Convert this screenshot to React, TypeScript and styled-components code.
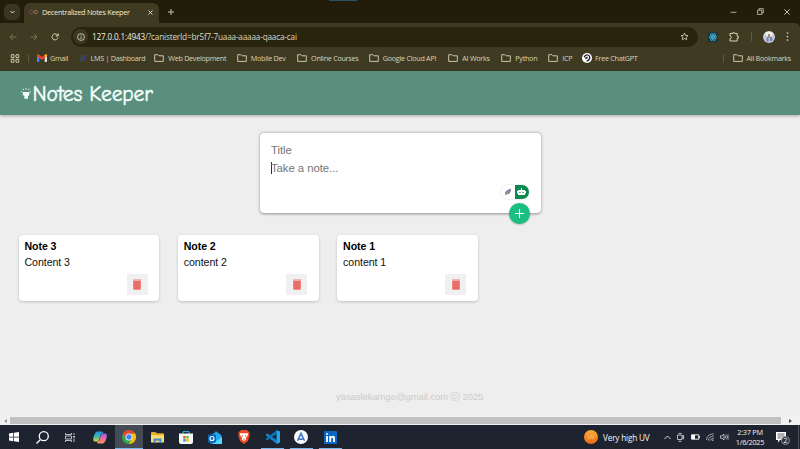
import React from "react";
import styled, { createGlobalStyle } from "styled-components";

const Global = createGlobalStyle`
  * { box-sizing: border-box; }
  html, body { margin: 0; padding: 0; overflow: hidden; background: #eee; }
  button, input, textarea { font: inherit; border: 0; padding: 0; margin: 0; outline: 0; }
`;

const Screen = styled.div`
  width: 800px;
  height: 449px;
  display: flex;
  flex-direction: column;
  overflow: hidden;
  font-family: "Open Sans", "Noto Sans", sans-serif;
  background: #eee;
`;

const Svg = styled.svg`
  display: block;
  flex: none;
  overflow: visible;
`;

/* Browser window */
const TitleBar = styled.div`
  position: relative;
  height: 23px;
  flex: none;
  display: flex;
  align-items: flex-end;
  background: #211d0a;
`;
const TopAccent = styled.span`
  position: absolute;
  left: 329px;
  top: 0;
  width: 28px;
  height: 1px;
  background: #2b5160;
`;
const TabSearch = styled.div`
  width: 16px;
  height: 16px;
  margin: 0 4px 3px 4px;
  border-radius: 5px;
  background: #3a3520;
  display: grid;
  place-items: center;
`;
const Tab = styled.div`
  width: 135px;
  height: 20px;
  padding: 0 6px 2px 5px;
  border-radius: 6px 6px 0 0;
  background: #3f3a22;
  display: flex;
  align-items: center;
`;
const TabTitle = styled.span`
  flex: 1;
  margin-left: 4px;
  font-size: 7.3px;
  letter-spacing: -0.27px;
  color: #eeead8;
  white-space: nowrap;
`;
const NewTab = styled.div`
  margin-left: 9px;
  height: 23px;
  display: flex;
  align-items: center;
`;
const WindowButtons = styled.div`
  margin-left: auto;
  height: 23px;
  padding-right: 10px;
  display: flex;
  align-items: center;
  gap: 20px;
`;
const Toolbar = styled.div`
  height: 25px;
  flex: none;
  display: flex;
  align-items: center;
  padding: 2px 11px 0 9px;
  background: #3f3a22;
  border-top-right-radius: 5px;
`;
const ToolbarBack = styled.div`
  flex: none;
  background: #211d0a;
`;
const NavButtons = styled.div`
  width: 62px;
  display: flex;
  gap: 13px;
`;
const AddressBar = styled.div`
  width: 627px;
  height: 20px;
  border-radius: 10px;
  padding: 0 9px 0 2px;
  background: #28240e;
  display: flex;
  align-items: center;
`;
const SiteInfo = styled.span`
  width: 15px;
  height: 15px;
  border-radius: 50%;
  background: #3d3821;
  display: grid;
  place-items: center;
`;
const Url = styled.span`
  flex: 1;
  margin-left: 4px;
  font-size: 8.2px;
  letter-spacing: -0.18px;
  color: #dcd8c2;
  white-space: nowrap;
`;
const HostName = styled.span`
  color: #f4f1e2;
`;
const ToolActions = styled.div`
  flex: 1;
  margin-left: 10px;
  display: flex;
  align-items: center;
  justify-content: space-between;
`;
const Divider = styled.span`
  width: 1px;
  height: 9px;
  background: #5f5a3f;
`;
const BookmarkBar = styled.nav`
  height: 23px;
  flex: none;
  display: flex;
  align-items: center;
  padding: 0 0 3px 10px;
  background: #3f3a22;
`;
const Bookmark = styled.div<{ $w: number; $gap?: number }>`
  width: ${(p) => p.$w}px;
  flex: none;
  display: flex;
  align-items: center;
  gap: ${(p) => p.$gap ?? 4}px;
  font-size: 7.2px;
  letter-spacing: -0.27px;
  color: #d9d4b8;
  white-space: nowrap;
`;
const BookmarkDivider = styled(Divider)<{ $left: number; $right: number }>`
  margin-left: ${(p) => p.$left}px;
  margin-right: ${(p) => p.$right}px;
`;

/* Notes page */
const AppHeader = styled.header`
  height: 44px;
  flex: none;
  display: flex;
  align-items: center;
  padding-left: 21px;
  background: #5a8f7e;
  box-shadow: 0 1px 3px rgba(0, 0, 0, 0.3);
`;
const Brand = styled.h1`
  margin: 2px 0 0 1.5px;
  font: 400 21.5px "Comic Neue", "Comic Sans MS", cursive;
  letter-spacing: -0.17px;
  color: #f4fffb;
  -webkit-text-stroke: 0.5px #f4fffb;
  white-space: nowrap;
`;
const Page = styled.main`
  flex: 1;
  display: flex;
  flex-direction: column;
  font-family: "Liberation Sans", Arial, sans-serif;
`;
const NoteForm = styled.form`
  position: relative;
  width: 281px;
  height: 80px;
  margin: 18px 0 0 259.5px;
  padding: 8px 11px;
  border-radius: 4px;
  background: #fff;
  box-shadow: 0 0.5px 3px rgba(0, 0, 0, 0.4);
  display: flex;
  flex-direction: column;
  font-size: 11.4px;
  letter-spacing: -0.08px;
  color: #757575;
`;
const Field = styled.div<{ $caret?: boolean }>`
  height: 18px;
  line-height: 18px;
  border-left: 1px solid transparent;
  text-indent: -0.5px;
  ${(p) => p.$caret && "height: 12px; line-height: 12px; margin-top: 3px; border-left-color: #333;"}
`;
const Assistant = styled.div`
  position: absolute;
  right: 12px;
  top: 51.5px;
  width: 28px;
  height: 14px;
  border-radius: 7px;
  overflow: hidden;
  display: flex;
  background: #fff;
  box-shadow: 0 0 2px rgba(0, 0, 0, 0.22);
`;
const AssistantHalf = styled.span<{ $on?: boolean }>`
  flex: 1;
  display: grid;
  place-items: center;
  background: ${(p) => (p.$on ? "#08894f" : "#fff")};
`;
const AddButton = styled.button`
  position: absolute;
  right: 10.5px;
  bottom: -10.5px;
  width: 21px;
  height: 21px;
  border-radius: 50%;
  background: #1bbf7f;
  box-shadow: 0 0.5px 2px rgba(0, 0, 0, 0.3);
  display: grid;
  place-items: center;
`;
const NoteList = styled.section`
  display: flex;
  gap: 18.5px;
  margin: 21.5px 0 0 18.5px;
`;
const NoteCard = styled.article`
  width: 140.8px;
  height: 66.5px;
  padding: 4px 11.5px 6px 6px;
  border-radius: 4px;
  background: #fff;
  box-shadow: 0 1px 3px rgba(0, 0, 0, 0.2);
  display: flex;
  flex-direction: column;
  color: #111;
`;
const NoteTitle = styled.h2`
  margin: 0;
  font-size: 10.6px;
  letter-spacing: -0.09px;
  line-height: 14px;
  color: #000;
`;
const NoteText = styled.p`
  margin: 2px 0 0;
  font-size: 10.6px;
  letter-spacing: -0.06px;
  line-height: 14px;
`;
const DeleteButton = styled.button`
  width: 21px;
  height: 21px;
  margin: auto 0 0 auto;
  background: #f0f0f0;
  display: grid;
  place-items: center;
`;
const Footer = styled.footer`
  margin: auto 0 12px 336px;
  font-size: 9.5px;
  letter-spacing: -0.07px;
  line-height: 14px;
  color: #ccc;
  white-space: nowrap;
  display: flex;
  align-items: center;
  gap: 2px;
`;
const ScrollBar = styled.div`
  height: 9px;
  flex: none;
  padding: 1px 0;
  background: #f1f1f1;
  display: grid;
  grid-template-columns: 10px 771px 1fr;
`;
const ScrollThumb = styled.span`
  background: #c1c1c1;
`;
const ScrollArrow = styled.span`
  display: grid;
  place-items: center;
`;

/* Desktop taskbar */
const Taskbar = styled.footer`
  height: 24px;
  flex: none;
  display: flex;
  align-items: center;
  background: #1e242f;
  color: #f3f4f6;
`;
const TaskItem = styled.div<{ $active?: boolean; $open?: boolean; $w?: number }>`
  width: ${(p) => p.$w ?? 28.8}px;
  height: 24px;
  flex: none;
  display: flex;
  align-items: center;
  justify-content: center;
  background: ${(p) => (p.$active ? "#454b55" : "transparent")};
  background-image: ${(p) =>
    p.$open || p.$active ? "linear-gradient(#76b9ed, #76b9ed)" : "none"};
  background-size: ${(p) => (p.$active ? "100%" : "23px")} 1.5px;
  background-position: center bottom;
  background-repeat: no-repeat;
`;
const Weather = styled.div`
  margin-left: auto;
  width: 80px;
  display: flex;
  align-items: center;
  gap: 5px;
  font-size: 8.2px;
  letter-spacing: -0.17px;
  white-space: nowrap;
`;
const UvBadge = styled.span`
  width: 14px;
  height: 14px;
  border-radius: 50%;
  background: linear-gradient(#fbab35, #ec6a18);
  color: #ffd79c;
  display: grid;
  place-items: center;
  font-size: 5px;
`;
const Tray = styled.div`
  width: 65px;
  display: flex;
  align-items: center;
  justify-content: space-between;
`;
const Clock = styled.div`
  width: 42px;
  font-size: 7.3px;
  line-height: 10px;
  letter-spacing: -0.25px;
  text-align: center;
  white-space: nowrap;
`;
const Notice = styled.div`
  position: relative;
  width: 28px;
  height: 24px;
  display: flex;
  align-items: center;
  padding-left: 5px;
  border-right: 1px solid #4a505a;
  margin-right: 1px;
`;
const NoticeCount = styled.span`
  position: absolute;
  left: 10px;
  top: 11px;
  width: 9px;
  height: 9px;
  border-radius: 50%;
  border: 1px solid #8d9299;
  background: #2b313b;
  display: grid;
  place-items: center;
  font-size: 7px;
  line-height: 7px;
`;

const Folder = () => (
  <Svg width="10" height="8" viewBox="0 0 10 8" fill="none" stroke="#d9d4b8" strokeWidth=".9">
    <path d="M.7.7H3.9L5 1.8H9.3V7.4H.7Z" />
  </Svg>
);

const Arrow = ({ flip }: { flip?: boolean }) => (
  <Svg width="8" height="8" viewBox="0 0 8 8" fill="none" stroke="#7d785c" strokeWidth=".9">
    <path d={flip ? "M.5 4H7M4 1L7 4L4 7" : "M7.5 4H1M4 1L1 4L4 7"} />
  </Svg>
);

const folders: [string, number][] = [
  ["Web Development", 82.5],
  ["Mobile Dev", 60.3],
  ["Online Courses", 71.7],
  ["Google Cloud API", 79.5],
  ["AI Works", 53],
  ["Python", 47],
  ["ICP", 33.8],
];

const notes = [
  { title: "Note 3", content: "Content 3" },
  { title: "Note 2", content: "content 2" },
  { title: "Note 1", content: "content 1" },
];

const Browser = () => (
  <>
    <TitleBar>
      <TopAccent />
      <TabSearch>
        <Svg width="5" height="4" viewBox="0 0 5 4" fill="none" stroke="#e5e0c8">
          <path d="M.5 1L2.5 3L4.5 1" />
        </Svg>
      </TabSearch>
      <Tab>
        <Svg width="9" height="6" viewBox="0 0 9 6" fill="none" strokeWidth=".8">
          <path d="M4.5 3C3.2 1 .7.5.7 3S3.2 5 4.5 3" stroke="#9a477b" />
          <path d="M4.5 3C5.8 1 8.3.5 8.3 3S5.8 5 4.5 3" stroke="#a6926a" />
        </Svg>
        <TabTitle>Decentralized Notes Keeper</TabTitle>
        <Svg width="5" height="5" viewBox="0 0 5 5" stroke="#eeead8" strokeWidth=".9">
          <path d="M.5.5L4.5 4.5M4.5.5L.5 4.5" />
        </Svg>
      </Tab>
      <NewTab>
        <Svg width="6" height="6" viewBox="0 0 6 6" stroke="#d9d4b8" strokeWidth=".9">
          <path d="M3 0V6M0 3H6" />
        </Svg>
      </NewTab>
      <WindowButtons>
        <Svg width="7" height="6" viewBox="0 0 7 6" stroke="#bab69e" strokeWidth=".9">
          <path d="M.5 3.3H6.5" />
        </Svg>
        <Svg width="7" height="7" viewBox="0 0 7 7" fill="none" stroke="#d5d1bb" strokeWidth=".8">
          <path d="M.6 2.2H4.8V6.4H.6ZM2 2V.7H6.3V5H5" />
        </Svg>
        <Svg width="6" height="6" viewBox="0 0 6 6" stroke="#e5e1cc" strokeWidth=".8">
          <path d="M.3.3L5.7 5.7M5.7.3L.3 5.7" />
        </Svg>
      </WindowButtons>
    </TitleBar>
    <ToolbarBack>
      <Toolbar>
        <NavButtons>
          <Arrow />
          <Arrow flip />
          <Svg width="8" height="8" viewBox="0 0 8 8" fill="none" stroke="#d9d4b8">
            <path d="M7 4.6A3 3 0 1 1 6.2 1.8L7 2.6M7.2.5V3H4.8" />
          </Svg>
        </NavButtons>
        <AddressBar>
          <SiteInfo>
            <Svg width="8" height="8" viewBox="0 0 8 8" fill="none" stroke="#e5e0c8" strokeWidth=".8">
              <circle cx="4" cy="4" r="3.4" />
              <path d="M4 3.5V6M4 2V2.8" />
            </Svg>
          </SiteInfo>
          <Url>
            <HostName>127.0.0.1:4943</HostName>/?canisterId=br5f7-7uaaa-aaaaa-qaaca-cai
          </Url>
          <Svg width="9" height="9" viewBox="0 0 24 24" fill="none" stroke="#d9d4b8" strokeWidth="2.3">
            <path d="M12 3L14.8 9L21.3 9.7L16.5 14L17.8 20.5L12 17.2L6.2 20.5L7.5 14L2.7 9.7L9.2 9Z" />
          </Svg>
        </AddressBar>
        <ToolActions>
          <Svg width="10" height="10" viewBox="0 0 10 10" fill="none" stroke="#48b8d9" strokeWidth=".7">
            <rect width="10" height="10" rx="2" fill="#173642" stroke="none" />
            <ellipse cx="5" cy="5" rx="4" ry="1.6" />
            <ellipse cx="5" cy="5" rx="4" ry="1.6" transform="rotate(60 5 5)" />
            <ellipse cx="5" cy="5" rx="4" ry="1.6" transform="rotate(120 5 5)" />
            <circle cx="5" cy="5" r=".7" fill="#48b8d9" />
          </Svg>
          <Svg width="10" height="10" viewBox="0 0 10 10" fill="none" stroke="#d9d4b8">
            <path d="M1 1.5H3.6V.8H5.8V1.5H8.2V4.2H9.2V6.3H8.2V9H1V6.8Q2.4 6.5 2.4 5.3T1 3.9Z" />
          </Svg>
          <Divider />
          <Svg width="12" height="12" viewBox="0 0 12 12">
            <circle cx="6" cy="6" r="6" fill="#c5c8dc" />
            <path d="M2 2Q6-1 10 2L9 5L3 5Z" fill="#f5efe8" />
            <path d="M3 9.8L4 6H5.5V10.9ZM7 10.8V7L9 6L9.6 9Z" fill="#7380bd" />
            <path d="M5 3H7L7.5 7H5Z" fill="#a58b83" />
          </Svg>
          <Svg width="3" height="9" viewBox="0 0 3 9" fill="#d9d4b8">
            <circle cx="1.5" cy="1" r=".85" />
            <circle cx="1.5" cy="4.5" r=".85" />
            <circle cx="1.5" cy="8" r=".85" />
          </Svg>
        </ToolActions>
      </Toolbar>
    </ToolbarBack>
    <BookmarkBar>
      <Svg width="10" height="9" viewBox="0 0 10 9" fill="none" stroke="#d9d4b8" strokeWidth=".9">
        <path d="M1.2.7H4V3.6H1.2ZM6 .7H8.8V3.6H6ZM1.2 5.3H4V8.2H1.2ZM6 5.3H8.8V8.2H6Z" />
      </Svg>
      <BookmarkDivider $left={8} $right={8} />
      <Bookmark $w={42} $gap={3}>
        <Svg width="10" height="8" viewBox="0 0 10 8">
          <path d="M0 1L2.3 2.6V8H.7Q0 8 0 7.2Z" fill="#4285f4" />
          <path d="M10 1L7.7 2.6V8H9.3Q10 8 10 7.2Z" fill="#dce8df" />
          <path d="M0 1Q.8-.5 2.3.8L5 3L7.7.8Q9.2-.5 10 1V2.3L5 6L0 2.3Z" fill="#ea4335" />
          <path d="M7.7.8Q9.5-.3 10 1V2.3L7.7 4Z" fill="#fbbc04" />
        </Svg>
        Gmail
      </Bookmark>
      <Bookmark $w={75.3} $gap={3.5}>
        <Svg width="8" height="8" viewBox="0 0 8 8" fill="none" stroke="#3b4b99" strokeWidth="1.3">
          <path d="M1.5 7L3.2 1.5M4.2 7L6.5 1" />
        </Svg>
        LMS | Dashboard
      </Bookmark>
      {folders.map(([name, w]) => (
        <Bookmark key={name} $w={w}>
          <Folder />
          {name}
        </Bookmark>
      ))}
      <Bookmark $w={140.5} $gap={3}>
        <Svg width="10" height="10" viewBox="0 0 10 10">
          <circle cx="5" cy="5" r="5" fill="#fff" />
          <path d="M2.2 4.2Q3 1.7 5.5 2Q8.2 2.5 7.7 5.2Q7.2 8 4.5 7.8M3 5.2H5V3.7" fill="none" stroke="#17182b" strokeWidth="1.2" />
        </Svg>
        Free ChatGPT
      </Bookmark>
      <BookmarkDivider $left={0} $right={9} />
      <Bookmark $w={60}>
        <Folder />
        All Bookmarks
      </Bookmark>
    </BookmarkBar>
  </>
);

const NotesPage = () => (
  <>
    <AppHeader>
      <Svg width="10" height="13" viewBox="0 0 10 13" fill="#f4fffb">
        <path d="M1.8 5H8.4V7.8L7 9.2V11.8H3.4V9.2L1.8 7.8Z" />
        <path d="M5 .8V2.5M1.8 1.8L2.7 3M8.2 1.8L7.3 3M0 4.6L1.2 5M10 4.6L8.8 5" stroke="#f4fffb" strokeWidth=".9" />
      </Svg>
      <Brand>Notes Keeper</Brand>
    </AppHeader>
    <Page>
      <NoteForm>
        <Field>Title</Field>
        <Field $caret>Take a note...</Field>
        <Assistant>
          <AssistantHalf>
            <Svg width="8" height="8" viewBox="0 0 8 8">
              <path d="M1 7.5L1.2 4Q4 .8 7 .8Q7.2 4 4.8 6L2 6.6Z" fill="#777c90" />
              <path d="M1 7.5L5.5 2.5" stroke="#d7d9e3" strokeWidth=".5" />
            </Svg>
          </AssistantHalf>
          <AssistantHalf $on>
            <Svg width="9" height="8" viewBox="0 0 9 8">
              <path d="M4 0H5V2H7.5Q8 2 8 3H9V5.5H8V6.5Q8 7 7.5 7H1.5Q1 7 1 6.5V5.5H0V3H1Q1 2 1.5 2H4Z" fill="#fff" />
              <circle cx="3" cy="4.4" r=".7" fill="#08894f" />
              <circle cx="6" cy="4.4" r=".7" fill="#08894f" />
            </Svg>
          </AssistantHalf>
        </Assistant>
        <AddButton type="button" aria-label="Add note">
          <Svg width="9" height="9" viewBox="0 0 9 9" stroke="#fff" strokeWidth="1.1">
            <path d="M4.5 0V9M0 4.5H9" />
          </Svg>
        </AddButton>
      </NoteForm>
      <NoteList>
        {notes.map((n) => (
          <NoteCard key={n.title}>
            <NoteTitle>{n.title}</NoteTitle>
            <NoteText>{n.content}</NoteText>
            <DeleteButton aria-label="Delete note">
              <Svg width="8" height="11" viewBox="0 0 8 11" fill="#ea6e66">
                <path d="M0 .4H8V1.7H0Z" opacity=".75" />
                <path d="M.2 2.1H7.8V9.8Q7.8 10.8 6.8 10.8H1.2Q.2 10.8.2 9.8Z" />
              </Svg>
            </DeleteButton>
          </NoteCard>
        ))}
      </NoteList>
      <Footer>
        <span>yasaslekamge@gmail.com</span>
        <span>ⓒ 2025</span>
      </Footer>
    </Page>
    <ScrollBar>
      <ScrollArrow>
        <Svg width="3" height="4" viewBox="0 0 3 4" fill="#999"><path d="M3 0V4L0 2Z" /></Svg>
      </ScrollArrow>
      <ScrollThumb />
      <ScrollArrow>
        <Svg width="3" height="4" viewBox="0 0 3 4" fill="#505050"><path d="M0 0V4L3 2Z" /></Svg>
      </ScrollArrow>
    </ScrollBar>
  </>
);

const DesktopBar = () => (
  <Taskbar>
    <TaskItem $w={28}>
      <Svg width="10" height="10" viewBox="0 0 10 10" fill="#fff">
        <path d="M0 1.4L4.3.8V4.7H0ZM5 .7L10 0V4.7H5ZM0 5.4H4.3V9.2L0 8.6ZM5 5.4H10V10L5 9.3Z" />
      </Svg>
    </TaskItem>
    <TaskItem $w={28}>
      <Svg width="13" height="13" viewBox="0 0 13 13" fill="none" stroke="#fff" strokeWidth="1.3">
        <circle cx="7.8" cy="5.2" r="4.5" />
        <path d="M4.5 8.5L.5 12.5" />
      </Svg>
    </TaskItem>
    <TaskItem $w={28}>
      <Svg width="10" height="9" viewBox="0 0 10 9" fill="none" stroke="#e3e5e8" strokeWidth=".8">
        <path d="M.5 0V1.5H6.5V0M.5 3H6.5V6H.5ZM.5 9V7.5H6.5V9M9 0V2M9 5.5V9" />
        <path d="M8.3 3H9.8V4.5H8.3Z" fill="#fff" stroke="none" />
      </Svg>
    </TaskItem>
    <TaskItem $w={31}>
      <Svg width="14" height="13" viewBox="0 0 14 13">
        <defs>
          <linearGradient id="copilotA" x2="0" y2="1"><stop stopColor="#2290ed" /><stop offset=".55" stopColor="#42bda0" /><stop offset="1" stopColor="#ebce42" /></linearGradient>
          <linearGradient id="copilotB" x2="0" y2="1"><stop stopColor="#8e67ee" /><stop offset=".5" stopColor="#e968a5" /><stop offset="1" stopColor="#f99a58" /></linearGradient>
        </defs>
        <path d="M4 .4H8.5Q10 .5 10.4 2.4H9Q8 2.4 7.6 3.8L6 9Q5.5 10.5 4 10.5H2Q0 10.5.2 7.7Q1 2 4 .4Z" fill="url(#copilotA)" />
        <path d="M10 12.6H5.5Q4 12.5 3.6 10.6H5Q6 10.6 6.4 9.2L8 4Q8.5 2.5 10 2.5H12Q14 2.5 13.8 5.3Q13 11 10 12.6Z" fill="url(#copilotB)" />
      </Svg>
    </TaskItem>
    <TaskItem $active $w={28}>
      <Svg width="14" height="14" viewBox="0 0 14 14">
        <circle cx="7" cy="7" r="7" fill="#34a853" />
        <path d="M.9 3.5A7 7 0 0 1 13.1 3.5H7L4 8.8Z" fill="#ea4335" />
        <path d="M13.1 3.5A7 7 0 0 1 7 14L10 8.8L9.8 3.5Z" fill="#fbbc05" />
        <circle cx="7" cy="7" r="3.5" fill="#fff" />
        <circle cx="7" cy="7" r="2.7" fill="#4285f4" />
      </Svg>
    </TaskItem>
    <TaskItem>
      <Svg width="13" height="11" viewBox="0 0 13 11">
        <path d="M0 1Q0 0 1 0H4.5L5.7 1.3H12Q13 1.3 13 2.2V10H0Z" fill="#e8ae29" />
        <path d="M0 3H13V10Q13 10.6 12.4 10.6H.6Q0 10.6 0 10Z" fill="#ffdb6c" />
        <path d="M2.5 11V6.6H10.5V11H8.5V8.7H4.5V11Z" fill="#3d8dd6" />
      </Svg>
    </TaskItem>
    <TaskItem>
      <Svg width="14" height="13" viewBox="0 0 14 13">
        <path d="M4 3V.6H10V3" fill="none" stroke="#35b7e8" />
        <path d="M0 2.6H14V11Q14 13 12 13H2Q0 13 0 11Z" fill="#f6f7f8" />
        <path d="M4.2 5H6.7V7.5H4.2Z" fill="#ef5425" />
        <path d="M7.3 5H9.8V7.5H7.3Z" fill="#7bb928" />
        <path d="M4.2 8.1H6.7V10.6H4.2Z" fill="#18a2e8" />
        <path d="M7.3 8.1H9.8V10.6H7.3Z" fill="#ffb900" />
      </Svg>
    </TaskItem>
    <TaskItem>
      <Svg width="14" height="13" viewBox="0 0 14 13">
        <path d="M2 5L8 0L14 5V11.5Q14 13 12.5 13H3.5Q2 13 2 11.5Z" fill="#1276ca" />
        <path d="M4 4L8.5 1L13 4V8L8 10L4 8Z" fill="#28a8ea" />
        <path d="M14 6V13H4Z" fill="#50d9ff" />
        <rect y="3.5" width="8" height="8" rx="1" fill="#0967b9" />
        <circle cx="4" cy="7.5" r="2" fill="none" stroke="#fff" strokeWidth="1.1" />
      </Svg>
    </TaskItem>
    <TaskItem>
      <Svg width="12" height="14" viewBox="0 0 12 14">
        <path d="M3 0H9L10.3 1.4L11.7 1.7L11.3 3.5L11.8 4.8L10 11L6 14L2 11L.2 4.8L.7 3.5L.3 1.7L1.7 1.4Z" fill="#f04b26" />
        <path d="M2.2 3L4.5 3.4L6 3L7.5 3.4L9.8 3L10 5L7.8 8L8.2 9.4L6 11L3.8 9.4L4.2 8L2 5Z" fill="#fff" />
        <path d="M3.5 5L5.2 5.5L4.7 7ZM8.5 5L6.8 5.5L7.3 7ZM4.7 9L6 8.4L7.3 9L6 9.8Z" fill="#f04b26" />
      </Svg>
    </TaskItem>
    <TaskItem $open>
      <Svg width="14" height="14" viewBox="0 0 14 14">
        <path d="M10.5 0L14 1.6V12.4L10.5 14Z" fill="#26a5ed" />
        <path d="M0 4.5L1.3 3.5L11 10.5V14L0 5.6Z" fill="#1688d1" />
        <path d="M0 9.5L1.3 10.5L11 3.5V0L0 8.4Z" fill="#0874ba" />
      </Svg>
    </TaskItem>
    <TaskItem $open>
      <Svg width="14" height="14" viewBox="0 0 14 14">
        <circle cx="7" cy="7" r="7" fill="#f9fbff" />
        <path d="M3.5 10.8L7 3.2L10.5 10.8M4 8.4Q7 10.2 10 8.4" fill="none" stroke="#376bc0" strokeWidth="1.4" />
        <circle cx="7" cy="5" r="1.5" fill="#4889e8" />
      </Svg>
    </TaskItem>
    <TaskItem $open>
      <Svg width="13" height="13" viewBox="0 0 13 13">
        <rect width="13" height="13" rx="1" fill="#0a66c2" />
        <circle cx="3" cy="3.1" r="1" fill="#fff" />
        <path d="M2.1 5H3.9V11H2.1ZM5.3 5H7V5.8Q9.2 3.8 10.9 6V11H9.1V7.5Q8.7 6.3 7.1 7.2V11H5.3Z" fill="#fff" />
      </Svg>
    </TaskItem>
    <Weather>
      <UvBadge>UV</UvBadge>
      Very high UV
    </Weather>
    <Tray>
      <Svg width="7" height="5" viewBox="0 0 7 5" fill="none" stroke="#e8eaed" strokeWidth=".9"><path d="M.5 4L3.5 1L6.5 4" /></Svg>
      <Svg width="7" height="9" viewBox="0 0 7 9" fill="none" stroke="#dfe1e4" strokeWidth=".8">
        <path d="M.5 2H5V6.5H.5ZM5 3.4L6.6 2.4V6L5 5M1.5.4H4.5M1.5 8.3H4.5" />
      </Svg>
      <Svg width="9" height="6" viewBox="0 0 9 6"><path d="M.5.8H7.8V5.2H.5ZM8.4 2V4" fill="none" stroke="#fff" strokeWidth=".9" /><path d="M1 1H4V5H1Z" fill="#fff" /></Svg>
      <Svg width="8" height="8" viewBox="0 0 8 8" fill="none" stroke="#bfc2c7" strokeWidth=".8">
        <path d="M.5 7Q1 1 7.8.8M2.4 7.5Q2.7 3.4 7.8 3M4.3 7.7Q4.6 5.5 7.8 5.2" />
        <circle cx="6.8" cy="7.2" r=".6" fill="#fff" stroke="none" />
      </Svg>
      <Svg width="9" height="8" viewBox="0 0 9 8" fill="none" stroke="#d2d5d9" strokeWidth=".8">
        <path d="M.5 2.8H2L4 1V7L2 5.2H.5ZM5.4 2.7Q6.3 4 5.4 5.3M6.7 1.6Q8.4 4 6.7 6.4" /><path d="M8 .8Q10 4 8 7.2" stroke="#777c85" />
      </Svg>
    </Tray>
    <Clock>
      <div>2:37 PM</div>
      <div>1/6/2025</div>
    </Clock>
    <Notice>
      <Svg width="10" height="11" viewBox="0 0 10 11">
        <path d="M0 0H10V8H4L2 10.5V8H0Z" fill="#fff" />
        <path d="M1.5 2H8.5M1.5 4H8.5M1.5 6H5" stroke="#1e242f" strokeWidth=".7" />
      </Svg>
      <NoticeCount>2</NoticeCount>
    </Notice>
  </Taskbar>
);

export default function App() {
  return (
    <Screen>
      <Global />
      <Browser />
      <NotesPage />
      <DesktopBar />
    </Screen>
  );
}
